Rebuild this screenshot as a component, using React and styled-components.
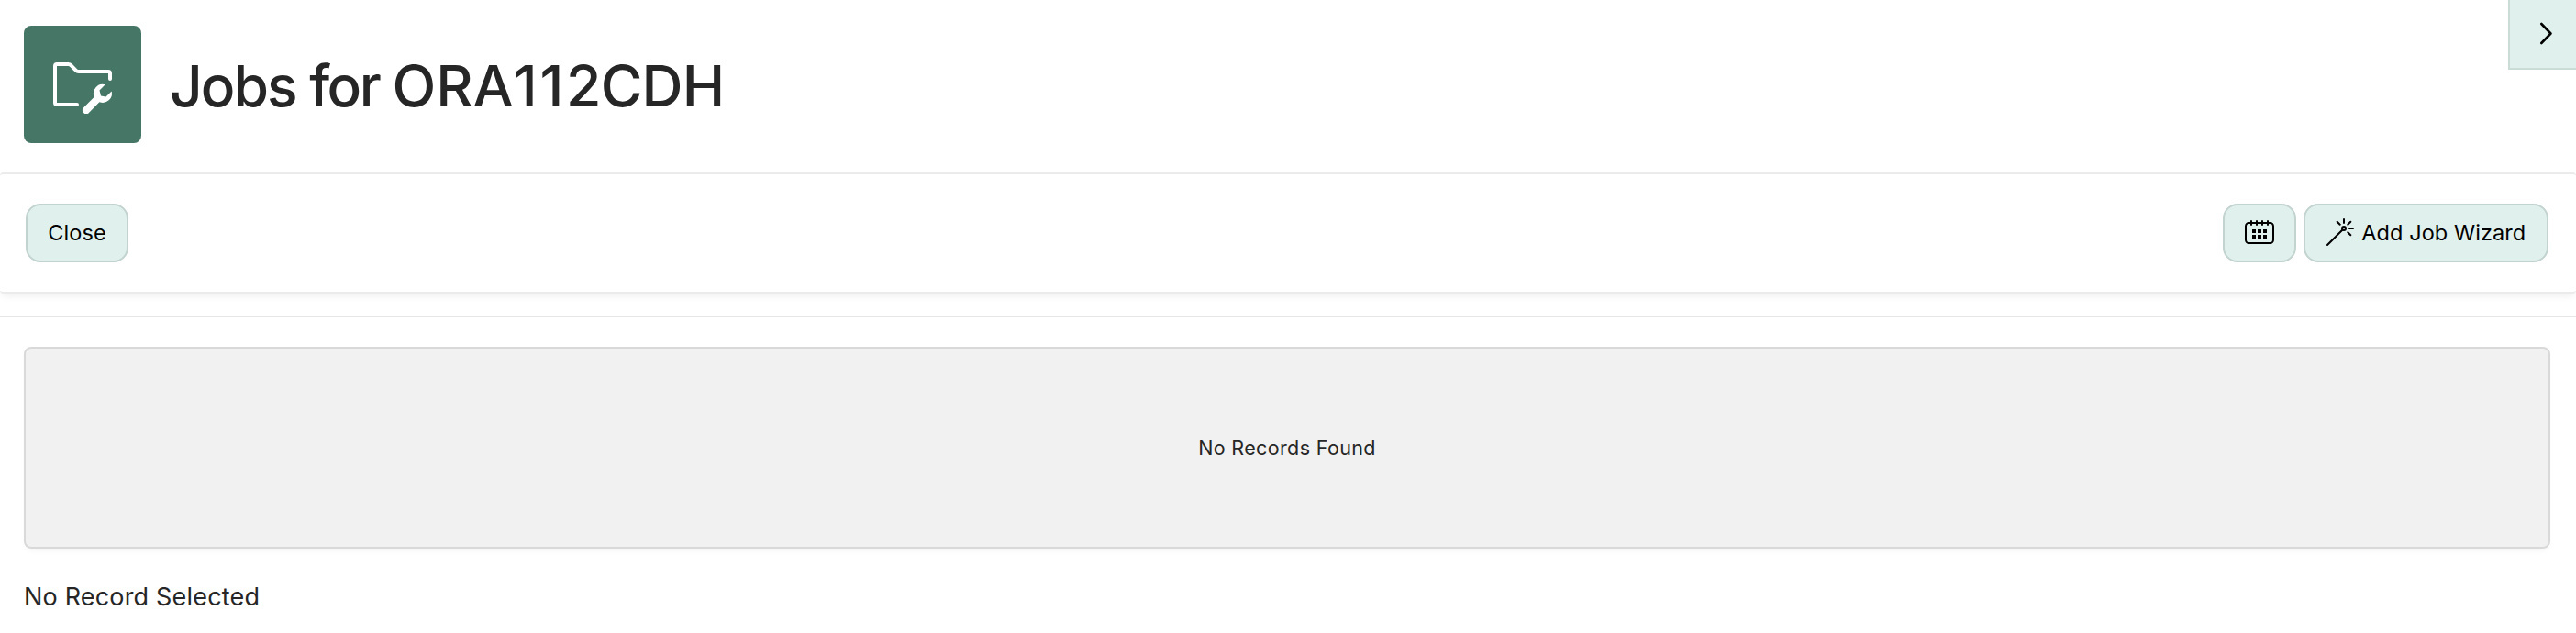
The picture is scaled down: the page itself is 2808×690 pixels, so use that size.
import React from "react";
import styled, { createGlobalStyle } from "styled-components";

const GlobalStyle = createGlobalStyle`
  *, *::before, *::after { box-sizing: border-box; }
  body {
    margin: 0;
    background: #fff;
    color: #262626;
    font-family: Inter, "Liberation Sans", sans-serif;
  }
`;

const Page = styled.div`
  position: relative;
  min-height: 690px;
  overflow: hidden;
`;

const Header = styled.header`
  display: flex;
  align-items: center;
  gap: 31px;
  height: 188px;
  padding: 0 26px 4px;
`;

const HeroIcon = styled.span`
  display: flex;
  align-items: center;
  justify-content: center;
  width: 128px;
  height: 128px;
  border-radius: 8px;
  background: #467665;
`;

const Title = styled.h1`
  margin: 3px 0 0;
  font-size: 62.3px;
  font-weight: 500;
  line-height: 80px;
  white-space: pre;
`;

const Tracked = styled.span`
  letter-spacing: ${(p) => p.$by}px;
`;

const PanelToggle = styled.button`
  position: absolute;
  top: 0;
  right: 0;
  display: flex;
  align-items: center;
  justify-content: center;
  width: 74px;
  height: 76px;
  padding: 0 0 0 6px;
  border: 0 solid #cbdcd7;
  border-width: 0 0 2px 2px;
  background: #e0f0ec;
  color: #000;
`;

const Toolbar = styled.div`
  display: flex;
  align-items: center;
  justify-content: space-between;
  height: 132px;
  padding: 0 30px 0 28px;
  border: 2px solid #ebebeb;
  border-width: 2px 0;
  border-radius: 4px;
  background: #fff;
  box-shadow: 0 4px 8px -2px rgba(0, 0, 0, 0.08);
`;

const ButtonGroup = styled.div`
  display: flex;
  gap: 8px;
`;

const Button = styled.button`
  display: flex;
  align-items: center;
  justify-content: center;
  gap: 6.5px;
  width: ${(p) => p.$width}px;
  height: 64px;
  padding: 0;
  border: 2px solid #c3d3cf;
  border-radius: 16px;
  background: #e0f0ec;
  color: #000;
  font: 400 23.5px/32px Inter, "Liberation Sans", sans-serif;
  letter-spacing: 0.06px;
  white-space: nowrap;
`;

const Body = styled.main`
  margin-top: 24px;
  padding: 32px 28px 0 26px;
  border-top: 2px solid #e6e6e6;
`;

const Region = styled.section`
  display: flex;
  align-items: center;
  justify-content: center;
  height: 220px;
  border: 2px solid #d9d9d9;
  border-radius: 8px;
  background: #f1f1f1;
  box-shadow: 0 4px 8px -4px rgba(0, 0, 0, 0.07);
`;

const EmptyMessage = styled.span`
  font-size: 21.5px;
  line-height: 32px;
  letter-spacing: 0.36px;
`;

const Selection = styled.p`
  margin: 33px 0 0;
  font-size: 27px;
  line-height: 40px;
  letter-spacing: 0.18px;
`;

const Icon = styled.svg`
  display: block;
  flex: none;
  fill: none;
  stroke: currentColor;
  stroke-width: ${(p) => p.$stroke || 2};
  stroke-linecap: round;
  stroke-linejoin: round;
`;

const FolderWrench = () => (
  <Icon width="64" height="64" viewBox="0 0 64 64" color="#fff" $stroke={4}>
    <path d="M26 54H4a2 2 0 0 1-2-2V12a2 2 0 0 1 2-2h12.5a4 4 0 0 1 2.8 1.2l5.600 5.600A4 4 0 0 0 27.700 18H60a2 2 0 0 1 2 2v6" />
    <path
      fill="currentColor"
      stroke="none"
      d="M56.700 32.300A10 10 0 0 0 44.700 45.700L33.200 57.200a4 4 0 0 0 5.700 5.700L50.400 51.300A10 10 0 0 0 63.600 39.400L57.500 45.500L52 44.500L50.500 38.500Z"
    />
  </Icon>
);

const CalendarIcon = () => (
  <Icon width="32" height="32" viewBox="0 0 32 32">
    <rect x="1" y="5" width="30" height="22" rx="3.500" />
    <path d="M7 3v4M13 3v4M19 3v4M25 3v4" />
    <path
      fill="currentColor"
      stroke="none"
      d="M8 12h4v4H8zM14 12h4v4h-4zM20 12h4v4h-4zM8 18h4v4H8zM14 18h4v4h-4zM20 18h4v4h-4z"
    />
  </Icon>
);

const WandIcon = () => (
  <Icon width="32" height="32" viewBox="0 0 32 32">
    <path d="M1 29L17.500 12.500" />
    <circle cx="19" cy="11" r="2" />
    <path d="M19 1v4M25 11h4M23.300 6.700l3-3M14.700 6.700l-3-3M23.300 15.300l3 3" />
  </Icon>
);

const ChevronRight = () => (
  <Icon width="32" height="32" viewBox="0 0 32 32" $stroke={2.6}>
    <path d="M11.300 5L21.500 15.500L11.300 26" />
  </Icon>
);

export default function App() {
  return (
    <Page>
      <GlobalStyle />
      <Header>
        <HeroIcon>
          <FolderWrench />
        </HeroIcon>
        <Title>
          <Tracked $by={-2}>{"Jobs "}</Tracked>
          <Tracked $by={-2.5}>{"for "}</Tracked>
          <Tracked $by={0}>ORA</Tracked>
          <Tracked $by={2.8}>11</Tracked>
          <Tracked $by={-0.8}>2CDH</Tracked>
        </Title>
      </Header>
      <PanelToggle aria-label="Expand">
        <ChevronRight />
      </PanelToggle>
      <Toolbar>
        <Button $width={112}>Close</Button>
        <ButtonGroup>
          <Button $width={80} aria-label="Calendar">
            <CalendarIcon />
          </Button>
          <Button $width={267}>
            <WandIcon />
            Add Job Wizard
          </Button>
        </ButtonGroup>
      </Toolbar>
      <Body>
        <Region>
          <EmptyMessage>No Records Found</EmptyMessage>
        </Region>
        <Selection>No Record Selected</Selection>
      </Body>
    </Page>
  );
}
